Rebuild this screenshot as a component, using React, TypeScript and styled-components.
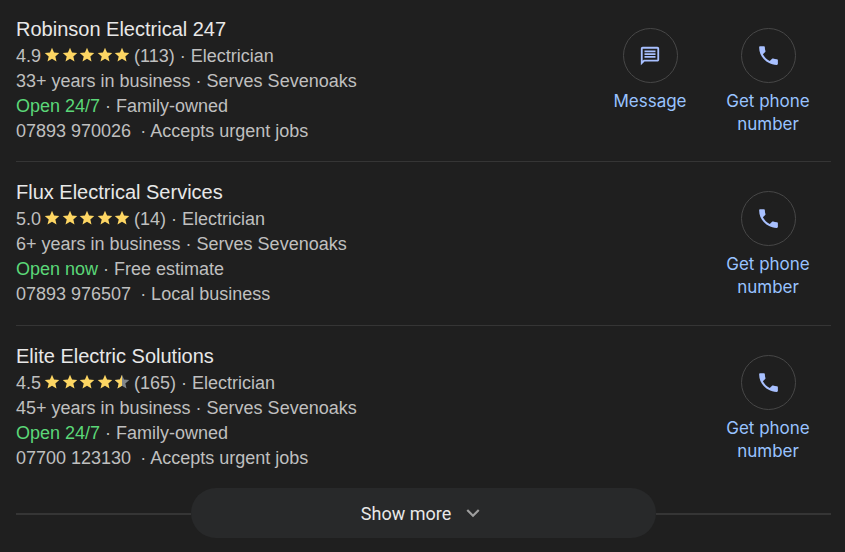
import React, { useId } from "react";
import styled, { createGlobalStyle } from "styled-components";

const GlobalStyle = createGlobalStyle`
  body {
    margin: 0;
    background: #1f1f1f;
    color: #bfbfbf;
    font-family: "Liberation Sans", Arial, sans-serif;
    font-size: 18px;
    line-height: 25px;
  }
`;

const Page = styled.main`
  padding: 0 14px 14px 16px;
`;

const Listings = styled.ul`
  list-style: none;
  margin: 0;
  padding: 0;
`;

const Listing = styled.li`
  display: flex;
  justify-content: space-between;
  padding: 15px 0 18px;
  border-bottom: 1px solid #353535;

  &:first-child {
    padding: 14px 0 17px;
  }

  &:last-child {
    padding-bottom: 17px;
    border-bottom: 0;
  }
`;

const Title = styled.h2`
  margin: 0;
  color: #e8e8e8;
  font-size: 20px;
  font-weight: 400;
  line-height: 30px;
`;

const Line = styled.div`
  display: flex;
  align-items: center;
  height: 25px;
  white-space: pre;
`;

const Stars = styled.span`
  display: flex;
  justify-content: space-between;
  width: 86px;
  margin: 0 4px 4px 3px;
`;

const StarIcon = styled.svg`
  display: block;
  width: 16px;
  height: 16px;
`;

const Hours = styled.span`
  color: #5bd778;
`;

const Phone = styled.span`
  margin-right: 4px;
`;

const Actions = styled.div`
  display: flex;
  align-items: flex-start;
  gap: 18px;
  padding: 14px 13px 0 0;
`;

const Action = styled.button`
  display: flex;
  flex-direction: column;
  align-items: center;
  gap: 7px;
  width: 100px;
  margin: 0;
  padding: 0;
  border: 0;
  background: none;
  color: #99c3ff;
  font-family: Inter, sans-serif;
  font-size: 17px;
  line-height: 23px;
  cursor: pointer;
`;

const Round = styled.span`
  display: flex;
  align-items: center;
  justify-content: center;
  box-sizing: border-box;
  width: 55px;
  height: 55px;
  border: 1px solid #474747;
  border-radius: 50%;
  color: #a8c0ff;
`;

const Glyph = styled.svg<{ $size: number }>`
  width: ${(p) => p.$size}px;
  height: ${(p) => p.$size}px;
  fill: currentColor;
`;

const Footer = styled.div`
  display: flex;
  align-items: center;

  &::before,
  &::after {
    content: "";
    flex: 1;
    height: 2px;
    margin-top: 2px;
    background: #353535;
  }
`;

const ShowMore = styled.button`
  display: flex;
  align-items: center;
  justify-content: center;
  gap: 9px;
  width: 57%;
  height: 50px;
  padding: 0;
  border: 0;
  border-radius: 25px;
  background: #28292a;
  color: #e8e8e8;
  font-family: Roboto, sans-serif;
  font-size: 18px;
  cursor: pointer;
`;

const Chevron = styled.svg`
  width: 26px;
  height: 26px;
  fill: #9e9e9e;
`;

const STAR = "M12 17.3l6.2 3.7-1.6-7L22 9.2l-7.2-.6L12 2 9.2 8.6 2 9.2 7.5 14l-1.7 7z";

function Star({ half }: { half: boolean }) {
  const id = useId();
  return (
    <StarIcon viewBox="1 1 22 22" aria-hidden="true">
      {half && (
        <clipPath id={id}>
          <rect width="12" height="24" />
        </clipPath>
      )}
      <path d={STAR} fill={half ? "#80868b" : "#fdd663"} />
      {half && <path d={STAR} fill="#fdd663" clipPath={`url(#${id})`} />}
    </StarIcon>
  );
}

function MessageAction() {
  return (
    <Action type="button">
      <Round>
        <Glyph $size={22} viewBox="0 0 24 24" aria-hidden="true">
          <path d="M4 4h16v12H5.17L4 17.17V4m0-2c-1.1 0-1.99.9-1.99 2L2 22l4-4h14c1.1 0 2-.9 2-2V4c0-1.1-.9-2-2-2H4zm2 10h12v2H6v-2zm0-3h12v2H6V9zm0-3h12v2H6V6z" />
        </Glyph>
      </Round>
      Message
    </Action>
  );
}

function PhoneAction() {
  return (
    <Action type="button">
      <Round>
        <Glyph $size={25} viewBox="0 0 24 24" aria-hidden="true">
          <path d="M6.62 10.79c1.44 2.83 3.76 5.14 6.59 6.59l2.2-2.2c.27-.27.67-.36 1.02-.24 1.12.37 2.33.57 3.57.57.55 0 1 .45 1 1V20c0 .55-.45 1-1 1C10.61 21 3 13.39 3 4c0-.55.45-1 1-1h3.5c.55 0 1 .45 1 1 0 1.25.2 2.45.57 3.57.11.35.03.74-.25 1.02l-2.2 2.2z" />
        </Glyph>
      </Round>
      Get phone number
    </Action>
  );
}

interface Business {
  name: string;
  rating: string;
  reviews: number;
  years: number;
  hours: string;
  trait: string;
  phone: string;
  note: string;
  message?: boolean;
}

const businesses: Business[] = [
  { name: "Robinson Electrical 247", rating: "4.9", reviews: 113, years: 33, hours: "Open 24/7", trait: "Family-owned", phone: "07893 970026", note: "Accepts urgent jobs", message: true },
  { name: "Flux Electrical Services", rating: "5.0", reviews: 14, years: 6, hours: "Open now", trait: "Free estimate", phone: "07893 976507", note: "Local business" },
  { name: "Elite Electric Solutions", rating: "4.5", reviews: 165, years: 45, hours: "Open 24/7", trait: "Family-owned", phone: "07700 123130", note: "Accepts urgent jobs" },
];

export default function App() {
  return (
    <Page>
      <GlobalStyle />
      <Listings>
        {businesses.map((b) => (
          <Listing key={b.name}>
            <div>
              <Title>{b.name}</Title>
              <Line>
                <span>{b.rating}</span>
                <Stars>
                  {[0, 1, 2, 3, 4].map((i) => (
                    <Star key={i} half={i === 4 && b.rating === "4.5"} />
                  ))}
                </Stars>
                <span>{`(${b.reviews}) · Electrician`}</span>
              </Line>
              <Line>{`${b.years}+ years in business · Serves Sevenoaks`}</Line>
              <Line>
                <Hours>{b.hours}</Hours>
                <span>{` · ${b.trait}`}</span>
              </Line>
              <Line>
                <Phone>{b.phone}</Phone>
                <span>{` · ${b.note}`}</span>
              </Line>
            </div>
            <Actions>
              {b.message && <MessageAction />}
              <PhoneAction />
            </Actions>
          </Listing>
        ))}
      </Listings>
      <Footer>
        <ShowMore type="button">
          Show more
          <Chevron viewBox="0 0 24 24" aria-hidden="true">
            <path d="M16.59 8.59L12 13.17 7.41 8.59 6 10l6 6 6-6z" />
          </Chevron>
        </ShowMore>
      </Footer>
    </Page>
  );
}
